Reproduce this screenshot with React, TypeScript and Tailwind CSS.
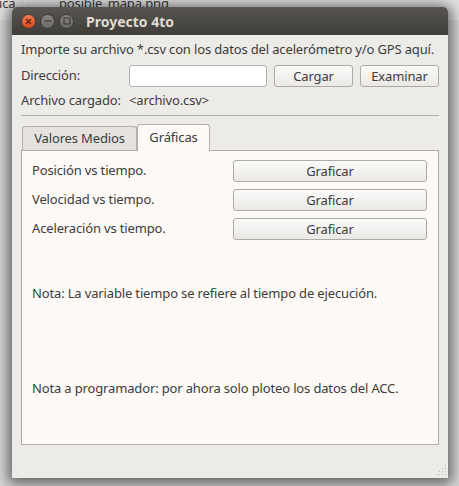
import React from 'react';

const font = { fontFamily: '"Noto Sans", "Open Sans", "DejaVu Sans", sans-serif', letterSpacing: '-0.15px' };

function GtkButton({ label, className = '' }: { label: string; className?: string }) {
  return (
    <button
      className={`h-[22px] rounded-[3px] border border-[#aeaaa5] bg-gradient-to-b from-[#fafaf9] to-[#ebe9e6] text-[13px] leading-none text-[#3c3c3c] ${className}`}
    >
      {label}
    </button>
  );
}

function WinButton({ kind }: { kind: 'close' | 'min' | 'max' }) {
  if (kind === 'close') {
    return (
      <div className="w-[15px] h-[15px] rounded-full bg-gradient-to-b from-[#f37b52] to-[#d9461c] border border-[#4a3a30] flex items-center justify-center">
        <svg width="7" height="7" viewBox="0 0 7 7">
          <path d="M1 1L6 6M6 1L1 6" stroke="#5a2010" strokeWidth="1.2" />
        </svg>
      </div>
    );
  }
  return (
    <div className="w-[15px] h-[15px] rounded-full bg-gradient-to-b from-[#8a8780] to-[#6c6a64] border border-[#3a3935] flex items-center justify-center">
      <svg width="8" height="8" viewBox="0 0 8 8">
        {kind === 'min' ? (
          <path d="M0.5 4H7.5" stroke="#3b3a36" strokeWidth="1.2" />
        ) : (
          <rect x="1" y="1" width="6" height="6" fill="none" stroke="#3b3a36" strokeWidth="1.1" />
        )}
      </svg>
    </div>
  );
}

function PlotRow({ label }: { label: string }) {
  return (
    <div className="flex items-center h-[22px]">
      <span className="flex-1">{label}</span>
      <GtkButton label="Graficar" className="w-[194px]" />
    </div>
  );
}

export default function App() {
  return (
    <div className="relative w-[459px] h-[486px] overflow-hidden bg-[#d9d9d9]" style={font}>
      {/* desktop behind the window */}
      <div className="absolute top-0 left-0 w-full h-[20px] bg-[#e4e4e4]" />
      <div className="absolute top-0 left-[25px] w-px h-[20px] bg-[#f4f4f4]" />
      <span className="absolute top-[-5px] left-[-1px] text-[13px] leading-[16px] text-[#3a3a3a]">ica</span>
      <span className="absolute top-[-5px] left-[59px] text-[13px] leading-[16px] text-[#3a3a3a]">posible_mapa.png</span>

      <div className="pt-[7px] pl-[12px]">
        <div className="relative w-[436px] h-[471px] flex flex-col rounded-t-[5px] bg-[#edebe8] shadow-[0_2px_14px_4px_rgba(0,0,0,0.55)]">
          {/* title bar */}
          <div className="h-[28px] flex items-center pl-[9px] rounded-t-[5px] bg-gradient-to-b from-[#58564f] to-[#3e3d39]">
            <div className="flex gap-[4px]">
              <WinButton kind="close" />
              <WinButton kind="min" />
              <WinButton kind="max" />
            </div>
            <span className="ml-[12px] text-[14px] font-bold text-[#dfdbd2] tracking-normal">Proyecto 4to</span>
          </div>

          {/* body */}
          <div className="flex-1 flex flex-col px-[9px] text-[13px] text-[#3c3c3c]">
            <div className="h-[30px] flex items-center whitespace-nowrap">
              Importe su archivo *.csv con los datos del acelerómetro y/o GPS aquí.
            </div>
            <div className="h-[22px] flex items-center">
              <span className="w-[108px]">Dirección:</span>
              <div className="w-[138px] h-[22px] rounded-[3px] border border-[#b3afaa] bg-white" />
              <GtkButton label="Cargar" className="ml-[7px] w-[79px]" />
              <GtkButton label="Examinar" className="ml-[7px] w-[79px]" />
            </div>
            <div className="h-[28px] flex items-center">
              <span className="w-[108px]">Archivo cargado:</span>
              <span>&lt;archivo.csv&gt;</span>
            </div>
            <div className="h-px bg-[#b0aca7]" />

            {/* tabs */}
            <div className="mt-[8px] flex items-end h-[26px] pl-[1px]">
              <div className="h-[24px] w-[115px] flex items-center justify-center rounded-t-[3px] border border-b-0 border-[#b3afaa] bg-[#e6e3df]">
                Valores Medios
              </div>
              <div className="relative z-10 h-[27px] -mb-px w-[73px] flex items-center justify-center rounded-t-[3px] border border-b-0 border-[#b3afaa] bg-[#fcf9f6]">
                Gráficas
              </div>
            </div>
            <div className="h-[295px] border border-[#b0aca7] bg-[#fcf9f6] pt-[9px] pl-[10px] pr-[11px] flex flex-col">
              <div className="flex flex-col gap-[7px]">
                <PlotRow label="Posición vs tiempo." />
                <PlotRow label="Velocidad vs tiempo." />
                <PlotRow label="Aceleración vs tiempo." />
              </div>
              <div className="mt-[45px] h-[18px] flex items-center">
                Nota: La variable tiempo se refiere al tiempo de ejecución.
              </div>
              <div className="mt-[77px] h-[18px] flex items-center">
                Nota a programador: por ahora solo ploteo los datos del ACC.
              </div>
            </div>
          </div>

          {/* resize grip */}
          <svg className="absolute right-[1px] bottom-[2px]" width="11" height="11" viewBox="0 0 11 11">
            {[
              [9, 0], [6, 3], [9, 3], [3, 6], [6, 6], [9, 6], [0, 9], [3, 9], [6, 9], [9, 9],
            ].map(([x, y], i) => (
              <rect key={i} x={x} y={y} width="1" height="1" fill="#b9b5b0" />
            ))}
          </svg>
        </div>
      </div>
    </div>
  );
}
